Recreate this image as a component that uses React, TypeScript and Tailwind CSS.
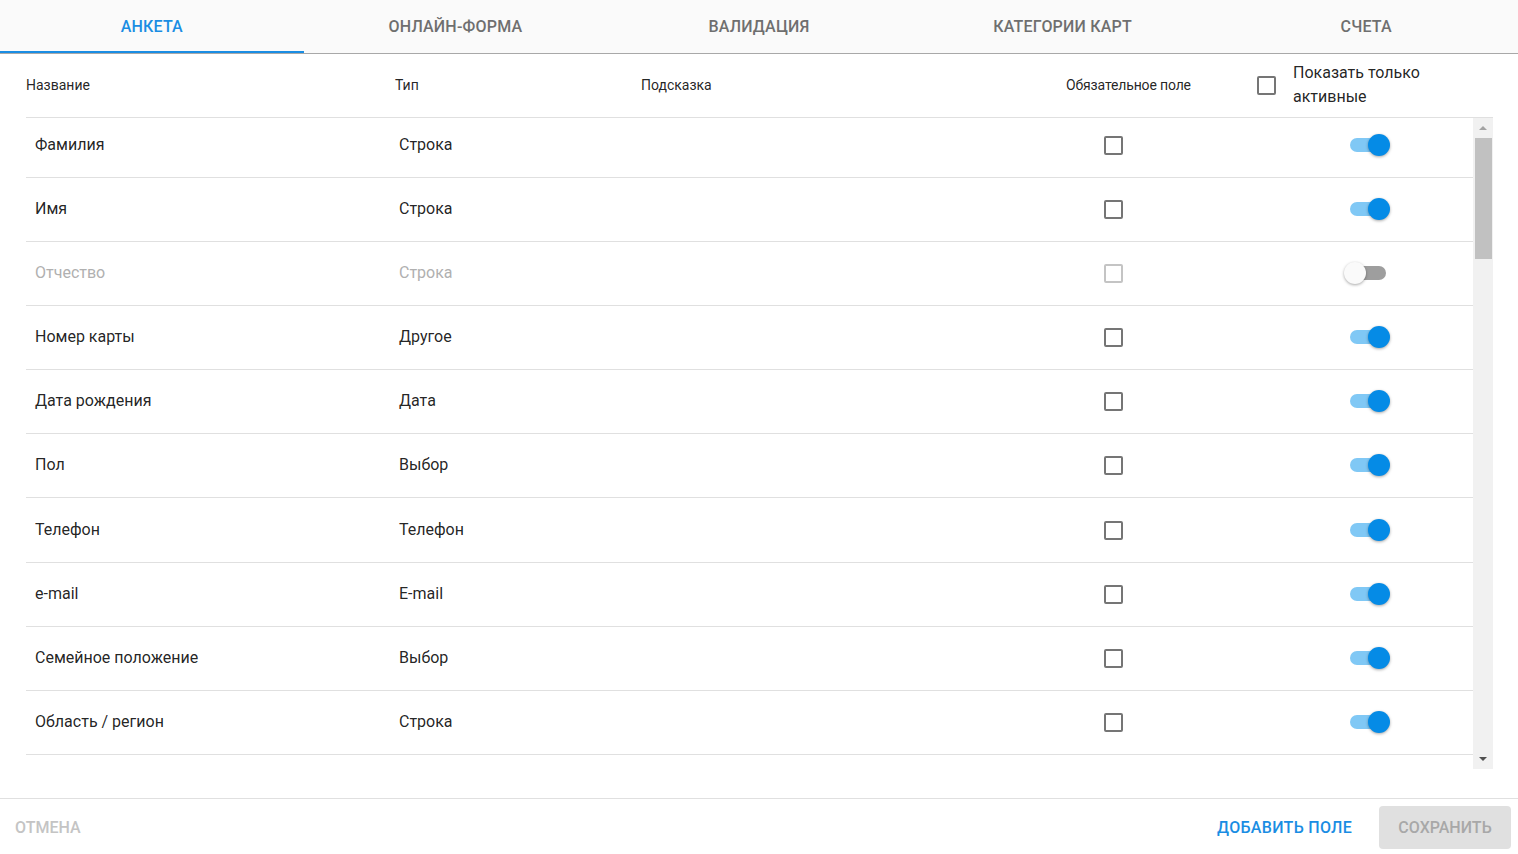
import React from "react";

type Field = { name: string; type: string; active: boolean };

const tabs = ["Анкета", "Онлайн-форма", "Валидация", "Категории карт", "Счета"];

const fields: Field[] = [
  { name: "Фамилия", type: "Строка", active: true },
  { name: "Имя", type: "Строка", active: true },
  { name: "Отчество", type: "Строка", active: false },
  { name: "Номер карты", type: "Другое", active: true },
  { name: "Дата рождения", type: "Дата", active: true },
  { name: "Пол", type: "Выбор", active: true },
  { name: "Телефон", type: "Телефон", active: true },
  { name: "e-mail", type: "E-mail", active: true },
  { name: "Семейное положение", type: "Выбор", active: true },
  { name: "Область / регион", type: "Строка", active: true },
];

function Checkbox({ disabled }: { disabled?: boolean }) {
  return (
    <span
      className={
        "block w-[19px] h-[19px] rounded-[2px] border-2 " +
        (disabled ? "border-[#c4c4c4]" : "border-[#757575]")
      }
    />
  );
}

function Toggle({ on }: { on: boolean }) {
  return (
    <span className="relative block w-[40px] h-[20px]">
      <span
        className={
          "absolute left-[2px] right-[2px] top-[3px] h-[14px] rounded-full " +
          (on ? "bg-[#80c8f5]" : "bg-[#9e9e9e]")
        }
      />
      <span
        className={
          "absolute top-0 w-[22px] h-[22px] -mt-[1px] rounded-full shadow-[0_1px_3px_rgba(0,0,0,0.35)] " +
          (on ? "right-[-2px] bg-[#058be6]" : "left-[-4px] bg-[#fafafa]")
        }
      />
    </span>
  );
}

export default function App() {
  return (
    <div
      className="w-[1518px] h-[854px] bg-white flex flex-col overflow-hidden text-[rgba(0,0,0,0.87)]"
      style={{ fontFamily: "Roboto, 'Noto Sans', sans-serif" }}
    >
      {/* tabs */}
      <div className="flex h-[54px] bg-[#fafafa] border-b border-[#a8a8a8]">
        {tabs.map((t, i) => (
          <div
            key={t}
            className={
              "flex-1 flex items-center justify-center pt-[4px] uppercase text-[16px] font-medium tracking-[0.2px] border-b-2 " +
              (i === 0
                ? "text-[#1a8de3] border-[#1a8de3]"
                : "text-[#6f6f6f] border-transparent")
            }
          >
            {t}
          </div>
        ))}
      </div>

      {/* header */}
      <div className="flex items-center h-[64px] ml-[26px] mr-[25px] border-b border-[#e0e0e0] text-[14px]">
        <div className="w-[369px]">Название</div>
        <div className="w-[246px]">Тип</div>
        <div className="w-[425px]">Подсказка</div>
        <div className="w-[191px] tracking-[-0.15px]">Обязательное поле</div>
        <div className="flex items-center gap-[17px] text-[16px] leading-[24px]">
          <Checkbox />
          <div className="pb-[1px]">
            Показать только
            <br />
            активные
          </div>
        </div>
      </div>

      {/* body */}
      <div className="flex h-[652px] ml-[26px] mr-[25px]">
        <div className="flex-1 overflow-hidden">
          {fields.map((f, i) => (
            <div
              key={f.name}
              className={
                "flex items-center border-b border-[#e0e0e0] text-[16px] " +
                (i === 0 ? "h-[60px] pb-[4px]" : i === 6 ? "h-[65px] pt-[1px]" : "h-[64px]") +
                (f.active ? "" : " text-[#b0b0b0]")
              }
            >
              <div className="w-[373px] pl-[9px]">{f.name}</div>
              <div className="w-[704px]">{f.type}</div>
              <div className="w-[20px] flex justify-center">
                <Checkbox disabled={!f.active} />
              </div>
              <div className="w-[225px]" />
              <Toggle on={f.active} />
            </div>
          ))}
        </div>
        <div className="w-[20px] bg-[#f1f1f1] flex flex-col items-center">
          <div className="h-[20px] flex items-center justify-center">
            <span className="w-0 h-0 border-x-[4px] border-x-transparent border-b-[4px] border-b-[#a3a3a3]" />
          </div>
          <div className="w-[17px] h-[121px] bg-[#c1c1c1]" />
          <div className="flex-1" />
          <div className="h-[20px] flex items-center justify-center">
            <span className="w-0 h-0 border-x-[4px] border-x-transparent border-t-[4px] border-t-[#505050]" />
          </div>
        </div>
      </div>

      {/* footer */}
      <div className="mt-[29px] border-t border-[#e0e0e0] flex items-center h-[56px] pt-[2px] px-[7px]">
        <button className="px-2 text-[16px] font-medium uppercase text-[#c4c4c4]">
          Отмена
        </button>
        <div className="flex-1" />
        <button className="px-2 mr-[19px] text-[16px] font-medium uppercase tracking-[0.3px] text-[#1a8de3]">
          Добавить поле
        </button>
        <button className="h-[43px] w-[132px] rounded-[4px] bg-[#e0e0e0] text-[16px] font-medium uppercase text-[#a8a8a8]">
          Сохранить
        </button>
      </div>
    </div>
  );
}
